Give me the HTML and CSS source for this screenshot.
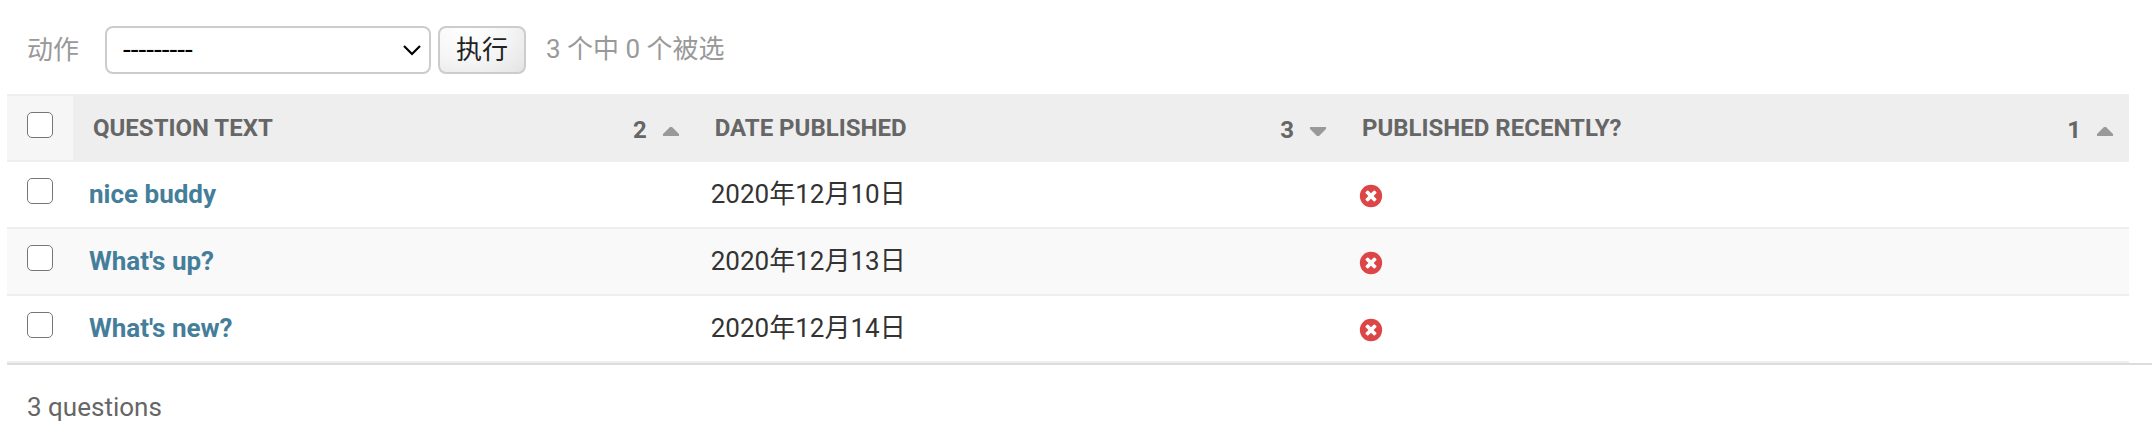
FILE: index.html
```
<!DOCTYPE html>
<html lang="zh-Hans">
<head>
<meta charset="utf-8">
<title>Questions</title>
<link rel="stylesheet" href="styles.css">
</head>
<body>
<svg class="sprite" aria-hidden="true">
  <symbol id="icon-no" viewBox="-128 -128 1792 1792">
    <circle cx="768" cy="768" r="768" fill="#dd4646"/>
    <path fill="#fff" d="M1149 994q0 26-19 45l-91 91q-19 19-45 19t-45-19l-181-181-181 181q-19 19-45 19t-45-19l-91-91q-19-19-19-45t19-45l181-181-181-181q-19-19-19-45t19-45l91-91q19-19 45-19t45 19l181 181 181-181q19-19 45-19t45 19l91 91q19 19 19 45t-19 45l-181 181 181 181q19 19 19 45z"/>
  </symbol>
  <symbol id="icon-asc" viewBox="0 0 16 9"><path fill="#999" d="M7 0h2l7 7v2H0V7z"/></symbol>
  <symbol id="icon-desc" viewBox="0 0 16 9"><path fill="#999" d="M7 9h2l7-7V0H0v2z"/></symbol>
  <symbol id="icon-chevron" viewBox="0 0 18 11"><path fill="none" stroke="#000" stroke-width="2.200" d="M1 1l8 8 8-8"/></symbol>
</svg>
<form class="changelist">
  <div class="actions">
    <label class="actions-label" for="action">动作</label>
    <span class="select-wrap">
      <select id="action" class="select"><option>---------</option></select>
      <svg class="chevron"><use href="#icon-chevron"/></svg>
    </span>
    <button type="button" class="button">执行</button>
    <span class="counter">3 个中 0 个被选</span>
  </div>
  <div class="results">
    <table class="table">
      <colgroup><col class="col-check"><col class="col-text"><col class="col-date"><col></colgroup>
      <thead>
        <tr>
          <th class="check-head"><input type="checkbox" class="check" aria-label="全选"></th>
          <th><div class="head"><a class="title" href="#">Question text</a><span class="sort">2<svg class="arrow"><use href="#icon-asc"/></svg></span></div></th>
          <th><div class="head"><a class="title" href="#">Date published</a><span class="sort">3<svg class="arrow"><use href="#icon-desc"/></svg></span></div></th>
          <th><div class="head"><a class="title" href="#">Published recently?</a><span class="sort">1<svg class="arrow"><use href="#icon-asc"/></svg></span></div></th>
        </tr>
      </thead>
      <tbody>
        <tr>
          <td class="check-cell"><input type="checkbox" class="check" aria-label="nice buddy"></td>
          <td><a class="link" href="#">nice buddy</a></td>
          <td>2020年12月10日</td>
          <td><svg class="no" role="img" aria-label="False"><use href="#icon-no"/></svg></td>
        </tr>
        <tr>
          <td class="check-cell"><input type="checkbox" class="check" aria-label="What's up?"></td>
          <td><a class="link" href="#">What's up?</a></td>
          <td>2020年12月13日</td>
          <td><svg class="no" role="img" aria-label="False"><use href="#icon-no"/></svg></td>
        </tr>
        <tr>
          <td class="check-cell"><input type="checkbox" class="check" aria-label="What's new?"></td>
          <td><a class="link" href="#">What's new?</a></td>
          <td>2020年12月14日</td>
          <td><svg class="no" role="img" aria-label="False"><use href="#icon-no"/></svg></td>
        </tr>
      </tbody>
    </table>
  </div>
  <p class="paginator">3 questions</p>
</form>
</body>
</html>
```
FILE: styles.css
```
* { box-sizing: border-box; }
body {
  margin: 0;
  background: #fff;
  color: #333;
  font: 26px/32px Roboto, "Noto Sans CJK SC", sans-serif;
}
.sprite { display: none; }
.changelist { padding-left: 7px; }
.actions {
  display: flex;
  align-items: center;
  padding: 26px 20px 20px;
  color: #999;
}
.actions-label { margin-right: 26px; }
.select-wrap { position: relative; width: 326px; margin-right: 7px; }
.select {
  appearance: none;
  display: block;
  width: 100%;
  height: 48px;
  padding: 0 16px;
  border: 2px solid #ccc;
  border-radius: 8px;
  background: #fff;
  color: #000;
  font: 28px/32px Roboto, sans-serif;
}
.chevron {
  position: absolute;
  right: 10px;
  top: 19px;
  width: 18px;
  height: 11px;
  pointer-events: none;
}
.button {
  height: 48px;
  padding: 0 16px;
  margin-right: 20px;
  border: 2px solid #ccc;
  border-radius: 8px;
  background: radial-gradient(ellipse at 30% 0%, #fff 0%, #f6f6f6 50%, #e0e0e0 110%);
  color: #222;
  font: 26px/32px Roboto, "Noto Sans CJK SC", sans-serif;
}
.counter { padding-bottom: 2px; }
.results { border-bottom: 2px solid #ddd; }
.table {
  width: calc(100% - 23px);
  table-layout: fixed;
  border-collapse: separate;
  border-spacing: 0;
}
.col-check { width: 66px; }
.col-text { width: 29.3%; }
.col-date { width: 30.5%; }
th {
  height: 68px;
  padding: 2px 0 0;
  border-top: 2px solid #eee;
  border-bottom: 2px solid #eee;
  background: #eee;
  color: #666;
  font-size: 24px;
  text-align: left;
}
.check-head { padding: 16px 20px; background: #f6f6f6; vertical-align: top; }
.head { display: flex; justify-content: space-between; padding: 0 16px 0 20px; }
.title { color: inherit; text-decoration: none; text-transform: uppercase; }
.sort { display: flex; align-items: center; gap: 16px; padding-top: 2px; }
.arrow { width: 16px; height: 9px; margin-top: 2px; }
td {
  height: 67px;
  padding: 16px 16px 17px;
  border-bottom: 2px solid #eee;
  vertical-align: top;
}
tbody tr:nth-child(even) { background: #f9f9f9; }
.check-cell { padding: 16px 20px; }
.check {
  appearance: none;
  display: block;
  width: 26px;
  height: 26px;
  margin: 0;
  border: 1px solid #767676;
  border-radius: 5px;
  background: #fff;
}
.link { color: #447e9b; font-weight: 700; text-decoration: none; }
.no { display: block; width: 26px; height: 26px; margin-top: 5px; }
.paginator { margin: 0; padding: 26px 20px; color: #666; }
```
